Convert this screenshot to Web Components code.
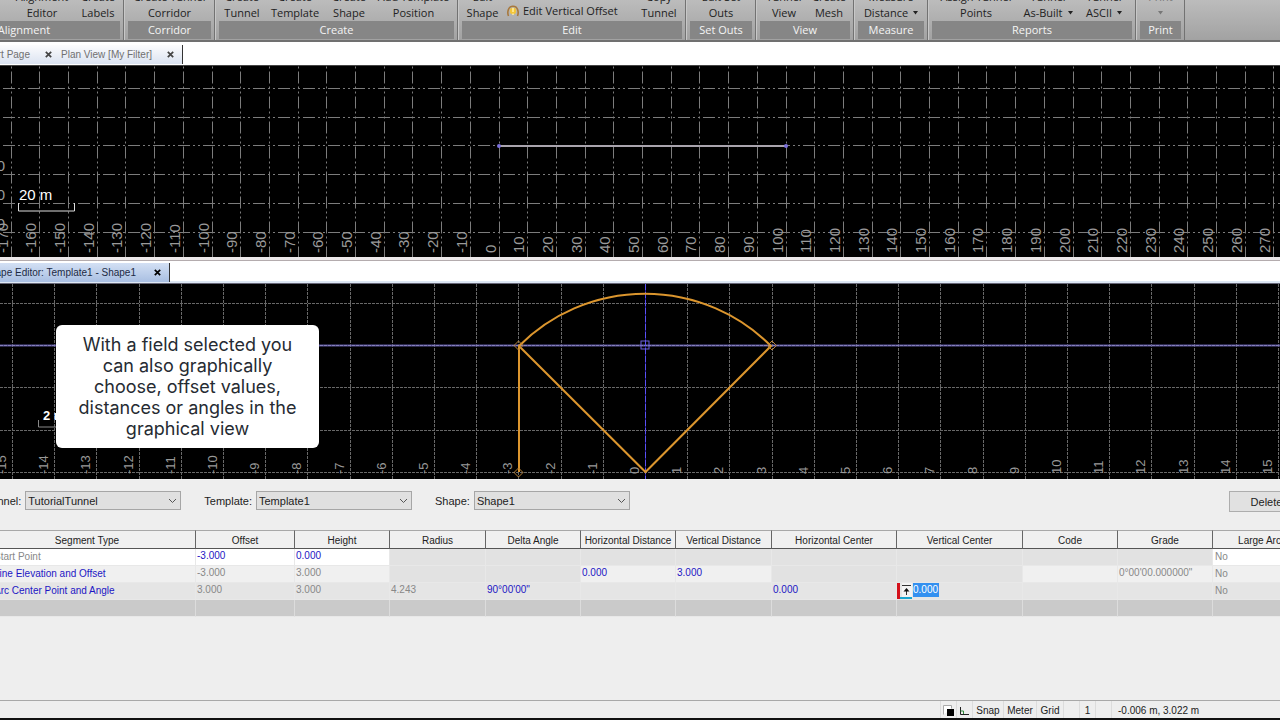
<!DOCTYPE html>
<html lang="en">
<head>
<meta charset="utf-8">
<title>Shape Editor</title>
<style>
  html, body {
    margin: 0;
    height: 100%;
  }

  body {
    overflow: hidden;
    font-family: "Liberation Sans", Arial, sans-serif;
    font-size: 10px;
    color: #222;
    background: #eee;
  }
</style>
</head>
<body>
<tunnel-app></tunnel-app>

<script>
class BaseElement extends HTMLElement {
  render(html) {
    const template = document.createElement('template');
    template.innerHTML = html;
    const root = this.shadowRoot || this.attachShadow({ mode: 'open' });
    root.replaceChildren(template.content.cloneNode(true));
  }
}

class RibbonButton extends BaseElement {
  connectedCallback() {
    const arrow = this.hasAttribute('menu') ? '<svg width="5" height="4" viewBox="0 0 5 4"><path d="M0 0h5L2.500 3.500z" fill="currentColor"/></svg>' : '';
    this.render(`
    <style>
      :host { display: block; min-width: 0; }
      button {
        display: flex;
        flex-direction: column;
        align-items: center;
        width: 100%;
        padding: 0;
        border: 0;
        background: none;
        color: #222;
        font: inherit;
        line-height: 16px;
        white-space: nowrap;
      }
      button:disabled { color: #777; }
      .line { display: flex; align-items: center; justify-content: center; gap: 5px; height: 16px; }
    </style>
    <button ${this.hasAttribute('disabled') ? 'disabled' : ''}>
      <span class="line">${this.getAttribute('top')}</span>
      <span class="line">${this.getAttribute('bottom') || ''}${arrow}</span>
    </button>`);
  }
}

class RibbonCommand extends BaseElement {
  connectedCallback() {
    this.render(`
    <style>
      :host { display: flex; align-items: flex-end; padding: 0 0 2px 4px; }
      button {
        display: flex;
        align-items: center;
        gap: 4px;
        padding: 0;
        border: 0;
        background: none;
        color: #222;
        font: inherit;
        line-height: 16px;
        white-space: nowrap;
      }
    </style>
    <button>
      <svg width="12" height="12" viewBox="0 0 12 12">
        <path d="M1.500 11C.2 8 .6 1.200 6 1.200S11.800 8 10.500 11" fill="none" stroke="#a8783c" stroke-width="1.600"/>
        <circle cx="6" cy="6" r="3.200" fill="#f2c53a"/>
        <path d="M6 3v4M6 8.500v1.500" stroke="#fff0a8" stroke-width="1.500"/>
      </svg>
      <slot></slot>
    </button>`);
  }
}

class RibbonGroup extends BaseElement {
  connectedCallback() {
    this.render(`
    <style>
      :host {
        display: flex;
        flex-direction: column;
        justify-content: flex-end;
        box-sizing: border-box;
        flex: none;
        height: 40px;
        padding: 0 3px 1px 4px;
        border-right: 1px solid #727272;
        box-shadow: inset 1px 0 #c8c8c8;
      }
      .items { display: grid; grid-template-columns: ${this.getAttribute('columns') || '1fr'}; }
      .label {
        height: 18px;
        line-height: 18px;
        text-align: center;
        color: #f4f4f4;
        background: #868686;
      }
    </style>
    <div class="items"><slot></slot></div>
    <div class="label">${this.getAttribute('label')}</div>`);
    this.style.width = this.getAttribute('width') + 'px';
  }
}

class AppRibbon extends BaseElement {
  connectedCallback() {
    this.render(`
    <style>
      :host {
        display: flex;
        height: 40px;
        flex: none;
        overflow: hidden;
        border-bottom: 2px solid #707070;
        background: linear-gradient(#bcbcbc, #a2a2a2);
        font-family: "Open Sans", "Noto Sans", sans-serif;
        font-size: 11px;
      }
      .track { display: flex; margin-left: -76px; }
    </style>
    <div class="track"><slot></slot></div>`);
  }
}

class TabStrip extends BaseElement {
  connectedCallback() {
    this.render(`
    <style>
      :host {
        display: flex;
        align-items: flex-end;
        flex: none;
        box-sizing: border-box;
        height: 24px;
        padding-bottom: 1px;
        overflow: hidden;
        background: #fff;
        border-bottom: 1px solid #444;
      }
      :host([active]) { height: 23px; border-bottom-color: #667; box-shadow: inset 0 -2px #dde7f3; }
      .tabs { display: flex; margin-left: -24px; border-right: 1px solid #333; }
    </style>
    <div class="tabs"><slot></slot></div>`);
  }
}

class ViewTab extends BaseElement {
  connectedCallback() {
    this.render(`
    <style>
      :host {
        display: flex;
        align-items: center;
        justify-content: flex-end;
        gap: 15px;
        box-sizing: border-box;
        height: 19px;
        padding: 0 8px 0 0;
        color: #707070;
        background: linear-gradient(#fcfcfd, #dbe3f1);
        white-space: nowrap;
      }
      :host([active]) {
        color: #1c2a44;
        gap: 18px;
        background: linear-gradient(#d3e0f4, #a9bfe2);
      }
      button { display: flex; padding: 0; border: 0; background: none; color: #444; }
      :host([active]) button { color: #000; }
    </style>
    <slot></slot>
    <button aria-label="Close"><svg width="7" height="7" viewBox="0 0 7 7"><path d="M.8.8l5.400 5.400M6.200.8L.8 6.200" stroke="currentColor" stroke-width="1.700"/></svg></button>`);
    this.style.width = this.getAttribute('width') + 'px';
  }
}

// Shared drawing of grid lines and rotated axis labels
function gridMarkup(o) {
  let out = '';
  for (let i = o.from; i <= o.to; i++) {
    const x = Math.round(o.originX + i * o.step) + 0.5;
    out += `<line x1="${x}" y1="${o.dashY}" x2="${x}" y2="${o.height}"/>`;
  }
  for (let i = 0; i < o.rows; i++) {
    const y = Math.round(o.firstRow + i * o.step) + 0.5;
    out += `<line x1="${o.dashX}" y1="${y}" x2="4000" y2="${y}"/>`;
  }
  let labels = '';
  for (let i = o.from; i <= o.to; i++) {
    const x = Math.round(o.originX + i * o.step) - o.labelGap;
    labels += `<text transform="translate(${x} ${o.labelY}) rotate(-90)">${i * o.unit}</text>`;
  }
  return `<g class="grid" stroke-dasharray="${o.dash}">${out}</g><g class="axis">${labels}</g>`;
}

class PlanView extends BaseElement {
  connectedCallback() {
    this.render(`
    <style>
      :host { display: block; flex: none; height: 191px; background: #000; overflow: hidden; }
      svg { display: block; width: 100%; height: 100%; }
      .grid { stroke: #7c7c7c; stroke-width: 1; }
      .axis { fill: #9a9a9a; font-size: 15px; }
      .scale { fill: #fff; font-size: 15px; }
    </style>
    <svg>
      ${gridMarkup({ originX: 498.5, step: 28.7, from: -17, to: 27, unit: 10, dashX: -22, dashY: -19.5, dash: '12 3 2 3 2 3', firstRow: 22, rows: 6, height: 191, labelY: 187, labelGap: 3 })}
      <g class="axis" text-anchor="end">
        <text x="5" y="105">-10</text>
        <text x="5" y="134">-20</text>
        <text x="5" y="163">-30</text>
      </g>
      <text class="scale" x="19" y="134">20 m</text>
      <path d="M18.500 137v8h56v-8" fill="none" stroke="#ddd"/>
      <path d="M499 80h287" stroke="#a9a4ad" stroke-width="2"/>
      <circle cx="499" cy="80" r="2" fill="#7b70dc"/>
      <circle cx="786" cy="80" r="2" fill="#7b70dc"/>
    </svg>`);
  }
}

class ShapeView extends BaseElement {
  connectedCallback() {
    this.render(`
    <style>
      :host { display: block; flex: none; position: relative; height: 195px; background: #000; overflow: hidden; }
      svg { display: block; width: 100%; height: 100%; }
      .grid { stroke: #686868; stroke-width: 1; }
      .axis { fill: #999; font-size: 13px; }
      .scale { fill: #fff; font-size: 13px; font-weight: bold; }
      .shape { fill: none; stroke: #dc962e; stroke-width: 2; }
      .node { fill: none; stroke: #b98238; stroke-width: 1; }
    </style>
    <svg>
      ${gridMarkup({ originX: 645, step: 42.2, from: -15, to: 15, unit: 1, dashX: 0, dashY: 0, dash: '3 1', firstRow: 19, rows: 5, height: 195, labelY: 190, labelGap: 6 })}
      <text class="scale" x="43" y="136">2 m</text>
      <path d="M38.500 136v7h84v-7" fill="none" stroke="#888"/>
      <path d="M0 61.500h4000" stroke="#5b549c" stroke-width="2"/>
      <path d="M0 61.500h4000" stroke="#8580ba" stroke-dasharray="3 1"/>
      <path d="M645.500 0v195" stroke="#2a22a0"/>
      <path d="M645.500 0v195" stroke="#5a50f4" stroke-dasharray="6 2"/>
      <rect x="641" y="57" width="8" height="8" fill="none" stroke="#6a60dc"/>
      <path class="shape" d="M519 188V62A178 178 0 0 1 771 62L645.500 188L519 62"/>
      <path class="node" d="M518.500 57l4.500 4.500-4.500 4.500-4.500-4.500zM518.500 184l4.500 4.500-4.500 4.500-4.500-4.500zM772 57l4.500 4.500-4.500 4.500-4.500-4.500z"/>
    </svg>
    <slot></slot>`);
  }
}

class HintBox extends BaseElement {
  connectedCallback() {
    this.render(`
    <style>
      :host {
        position: absolute;
        left: 56px;
        top: 41px;
        box-sizing: border-box;
        width: 263px;
        padding: 9px 15px;
        border-radius: 6px;
        background: #fff;
        color: #262b32;
        font-family: Inter, "Open Sans", sans-serif;
        font-size: 18px;
        line-height: 21px;
        text-align: center;
      }
    </style>
    <slot></slot>`);
  }
}

class SelectField extends BaseElement {
  connectedCallback() {
    this.render(`
    <style>
      :host { display: flex; align-items: center; gap: 4px; font-size: 11px; }
      .box { display: grid; align-items: center; width: 156px; }
      select, svg { grid-area: 1 / 1; }
      select {
        appearance: none;
        box-sizing: border-box;
        width: 100%;
        height: 19px;
        padding: 0 2px;
        border: 1px solid #a6a6a6;
        border-radius: 0;
        background: #e0e0e0;
        color: #222;
        font: inherit;
      }
      svg { justify-self: end; margin-right: 4px; pointer-events: none; }
    </style>
    <label for="field">${this.getAttribute('label')}</label>
    <div class="box">
      <select id="field"><option>${this.getAttribute('value')}</option></select>
      <svg width="9" height="6" viewBox="0 0 9 6"><path d="M1 1l3.500 3.500L8 1" fill="none" stroke="#555"/></svg>
    </div>`);
  }
}

class ShapeToolbar extends BaseElement {
  connectedCallback() {
    this.render(`
    <style>
      :host {
        display: flex;
        align-items: flex-start;
        gap: 23px;
        flex: none;
        box-sizing: border-box;
        height: 51px;
        padding-top: 12px;
        margin: 0 -24px 0 -15px;
      }
      button {
        width: 75px;
        height: 21px;
        margin-left: auto;
        padding: 0;
        border: 1px solid #adadad;
        background: #e1e1e1;
        color: #222;
        font: inherit;
        font-size: 11px;
      }
    </style>
    <slot></slot>
    <button>Delete</button>`);
  }
}

class SegmentTable extends BaseElement {
  connectedCallback() {
    const columns = [
      ['Segment Type', 217], ['Offset', 99], ['Height', 95], ['Radius', 96],
      ['Delta Angle', 95], ['Horizontal Distance', 95], ['Vertical Distance', 96],
      ['Horizontal Center', 125], ['Vertical Center', 126], ['Code', 95],
      ['Grade', 95], ['Large Arc', 0]
    ];
    // Each cell: [text, classes]; e = editable, f = filled
    const rows = [
      ['', [['Start Point', 'f'], ['-3.000', 'f e'], ['0.000', 'f e'], [], [], [], [], [], [], [], [], ['No', 'f']]],
      ['', [['Line Elevation and Offset', 'f e'], ['-3.000', 'f'], ['3.000', 'f'], [], [], ['0.000', 'f e'], ['3.000', 'f e'], [], [], ['', 'f'], ['0°00\'00.000000"', 'f'], ['No', 'f']]],
      ['', [['Arc Center Point and Angle', 'e'], ['3.000'], ['3.000'], ['4.243'], ['90°00\'00"', 'e'], [], [], ['0.000', 'e'], [null, 'edit'], [], [], ['No']]],
      ['new', [[], [], [], [], [], [], [], [], [], [], [], []]]
    ];
    const editor = `
      <div class="editor">
        <svg width="15" height="16" viewBox="0 0 15 16">
          <path d="M0 0h3v16H0z" fill="#d4111b"/>
          <path d="M3 14h12v2H3z" fill="#19a5d0"/>
          <path d="M5 0h10v14H5z" fill="#f3f3f3"/>
          <path d="M5 2.500h9M9.500 12V6" stroke="#333" fill="none"/>
          <path d="M6.500 8.500l3-3.500 3 3.500z" fill="#111"/>
        </svg>
        <input aria-label="Vertical Center" value="0.000">
      </div>`;
    this.render(`
    <style>
      :host { display: block; flex: none; margin: 0 -27px 0 -21px; }
      table { width: 100%; table-layout: fixed; border-collapse: separate; border-spacing: 0; }
      th, td { box-sizing: border-box; padding: 0; white-space: nowrap; }
      th {
        height: 19px;
        padding-top: 2px;
        line-height: 15px;
        border-top: 1px solid #a8a8a8;
        border-bottom: 1px solid #555;
        border-right: 1px solid #666;
        background: #f0f0f0;
        font-weight: normal;
      }
      td {
        height: 17px;
        line-height: 14px;
        vertical-align: top;
        padding-left: 1px;
        border-right: 1px solid #e8e8e8;
        border-bottom: 1px solid #e8e8e8;
        background: #e2e2e2;
        color: #888;
      }
      td:first-child, td:last-child { line-height: 16px; }
      td:first-child { padding-left: 15px; }
      td:last-child { padding-left: 2px; }
      tr:nth-child(1) .f { background: #fff; }
      tr:nth-child(2) .f { background: #f0f0f0; }
      tr:nth-child(3) td { background: #e5e5e5; }
      tr.new td { background: #cacaca; border-right-color: #dcdcdc; }
      td.e { color: #1c16c4; }
      td.edit { padding-left: 0; }
      .editor { display: flex; align-items: flex-start; gap: 1px; height: 16px; }
      svg { display: block; }
      input {
        box-sizing: border-box;
        width: 26px;
        height: 14px;
        padding: 0;
        border: 0;
        background: #3390f0;
        color: #fff;
        font: inherit;
      }
    </style>
    <table>
      <colgroup>${columns.map(c => c[1] ? `<col style="width: ${c[1]}px">` : '<col>').join('')}</colgroup>
      <thead><tr>${columns.map(c => `<th>${c[0]}</th>`).join('')}</tr></thead>
      <tbody>
        ${rows.map(([name, cells]) => `<tr class="${name}">${cells.map(([text = '', cls = '']) =>
          `<td class="${cls}">${text === null ? editor : text}</td>`).join('')}</tr>`).join('')}
      </tbody>
    </table>`);
  }
}

class StatusBar extends BaseElement {
  connectedCallback() {
    this.render(`
    <style>
      :host {
        display: flex;
        justify-content: flex-end;
        box-sizing: border-box;
        flex: none;
        height: 20px;
        margin-top: auto;
        border-top: 1px solid #a8a8a8;
        border-bottom: 2px solid #111;
        line-height: 18px;
      }
      span {
        display: flex;
        align-items: center;
        justify-content: center;
        box-sizing: border-box;
        width: 16px;
        padding-top: 2px;
        border-left: 1px solid #dcdcdc;
      }
      .snap { width: 31px; }
      .meter { width: 33px; }
      .grid { width: 27px; }
      .coords { width: 169px; justify-content: flex-start; padding-left: 6px; }
    </style>
    <span><svg width="12" height="12" viewBox="0 0 12 12"><path d="M.5 9.500v-9h8v3" fill="#fff" stroke="#aaa"/><path d="M4 4h7v7H4z" fill="#000"/></svg></span>
    <span><svg width="11" height="10" viewBox="0 0 11 10"><path d="M1.500 1v7.500H10" fill="none" stroke="#222"/><path d="M1.500 5h3v3" fill="none" stroke="#2f8b3a"/></svg></span>
    <span class="snap">Snap</span>
    <span class="meter">Meter</span>
    <span class="grid">Grid</span>
    <span></span>
    <span>1</span>
    <span></span>
    <span class="coords">-0.006 m, 3.022 m</span>`);
  }
}

class TunnelApp extends BaseElement {
  connectedCallback() {
    this.render(`
    <style>
      :host { display: flex; flex-direction: column; height: 100vh; overflow: hidden; }
      .splitter { flex: none; box-sizing: border-box; height: 4px; background: #ece8ea; border-bottom: 1px solid #b4acae; }
    </style>
    <app-ribbon>
      <ribbon-group label="Alignment" width="200" columns="80px 68px 1fr">
        <span></span>
        <ribbon-button top="Alignment" bottom="Editor"></ribbon-button>
        <ribbon-button top="Create" bottom="Labels"></ribbon-button>
      </ribbon-group>
      <ribbon-group label="Corridor" width="91">
        <ribbon-button top="Create Tunnel" bottom="Corridor"></ribbon-button>
      </ribbon-group>
      <ribbon-group label="Create" width="243" columns="46px 60px 48px 1fr">
        <ribbon-button top="Create" bottom="Tunnel"></ribbon-button>
        <ribbon-button top="Create" bottom="Template"></ribbon-button>
        <ribbon-button top="Create" bottom="Shape"></ribbon-button>
        <ribbon-button top="Add Template" bottom="Position"></ribbon-button>
      </ribbon-group>
      <ribbon-group label="Edit" width="228" columns="41px 1fr 46px">
        <ribbon-button top="Edit" bottom="Shape"></ribbon-button>
        <ribbon-command>Edit Vertical Offset</ribbon-command>
        <ribbon-button top="Copy" bottom="Tunnel"></ribbon-button>
      </ribbon-group>
      <ribbon-group label="Set Outs" width="70">
        <ribbon-button top="Edit Set" bottom="Outs"></ribbon-button>
      </ribbon-group>
      <ribbon-group label="View" width="98" columns="48px 1fr">
        <ribbon-button top="Tunnel" bottom="View"></ribbon-button>
        <ribbon-button top="Create" bottom="Mesh"></ribbon-button>
      </ribbon-group>
      <ribbon-group label="Measure" width="74">
        <ribbon-button top="Measure" bottom="Distance" menu></ribbon-button>
      </ribbon-group>
      <ribbon-group label="Reports" width="208" columns="88px 56px 1fr">
        <ribbon-button top="Assign Tunnel" bottom="Points"></ribbon-button>
        <ribbon-button top="Tunnel" bottom="As-Built" menu></ribbon-button>
        <ribbon-button top="Tunnel" bottom="ASCII" menu></ribbon-button>
      </ribbon-group>
      <ribbon-group label="Print" width="49">
        <ribbon-button top="Print" menu disabled></ribbon-button>
      </ribbon-group>
    </app-ribbon>
    <tab-strip>
      <view-tab width="84">Start Page</view-tab>
      <view-tab width="122">Plan View [My Filter]</view-tab>
    </tab-strip>
    <plan-view></plan-view>
    <div class="splitter"></div>
    <tab-strip active>
      <view-tab width="193" active>Shape Editor: Template1 - Shape1</view-tab>
    </tab-strip>
    <shape-view>
      <hint-box>With a field selected you can also graphically choose, offset values, distances or angles in the graphical view</hint-box>
    </shape-view>
    <shape-toolbar>
      <select-field label="Tunnel:" value="TutorialTunnel"></select-field>
      <select-field label="Template:" value="Template1"></select-field>
      <select-field label="Shape:" value="Shape1"></select-field>
    </shape-toolbar>
    <segment-table></segment-table>
    <status-bar></status-bar>`);
  }
}

customElements.define('ribbon-button', RibbonButton);
customElements.define('ribbon-command', RibbonCommand);
customElements.define('ribbon-group', RibbonGroup);
customElements.define('app-ribbon', AppRibbon);
customElements.define('tab-strip', TabStrip);
customElements.define('view-tab', ViewTab);
customElements.define('plan-view', PlanView);
customElements.define('shape-view', ShapeView);
customElements.define('hint-box', HintBox);
customElements.define('select-field', SelectField);
customElements.define('shape-toolbar', ShapeToolbar);
customElements.define('segment-table', SegmentTable);
customElements.define('status-bar', StatusBar);
customElements.define('tunnel-app', TunnelApp);
</script>
</body>
</html>
